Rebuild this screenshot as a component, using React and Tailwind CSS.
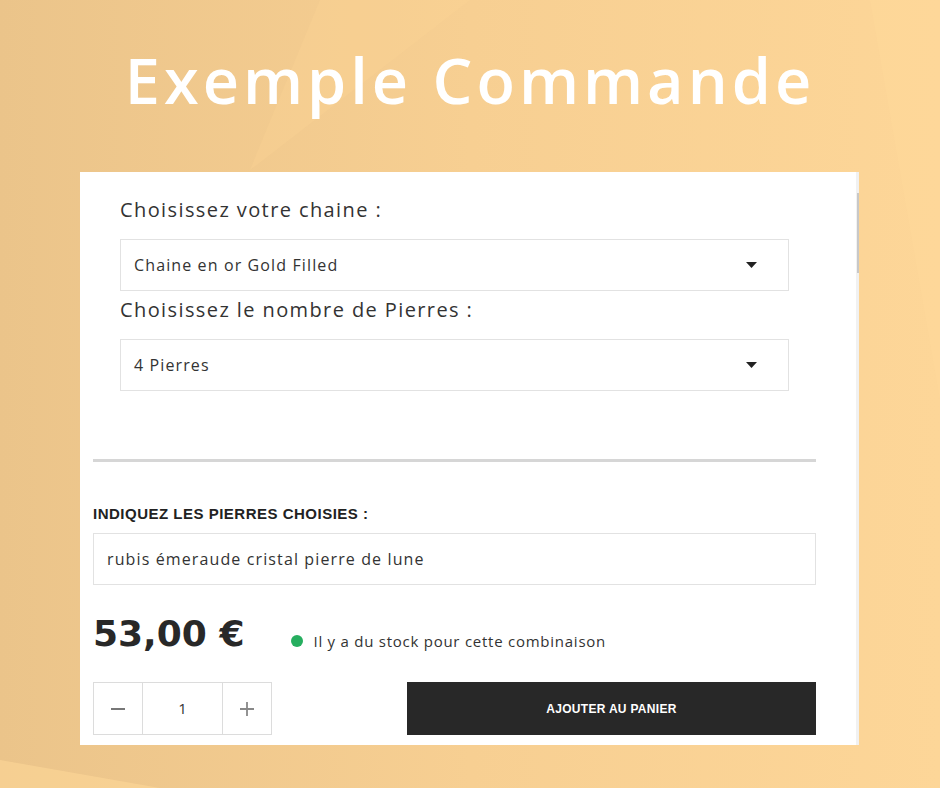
import React from 'react';

function Caret() {
  return (
    <svg width="11" height="6" viewBox="0 0 11 6" className="shrink-0">
      <path d="M0 0h11L5.5 6z" fill="#222" />
    </svg>
  );
}

function SelectBox({ value }) {
  return (
    <div className="flex h-[52px] items-center justify-between border border-[#e2e2e2] pl-[13px] pr-[31px]">
      <span className="text-[16px] tracking-[0.07em] text-[#333]">{value}</span>
      <Caret />
    </div>
  );
}

export default function App() {
  return (
    <div
      className="relative h-[788px] w-[940px] overflow-hidden bg-gradient-to-r from-[#ebc48a] via-[#f7cf92] to-[#fdd698]"
      style={{ fontFamily: '"Open Sans", "Noto Sans", sans-serif' }}
    >
      {/* faint light shapes in the background */}
      <svg className="absolute inset-0" width="940" height="788">
        <polygon points="0,760 0,788 160,788" fill="#fed797" opacity="0.6" />
        <polygon points="320,0 470,0 250,170" fill="#fbd495" opacity="0.35" />
        <polygon points="870,0 940,0 940,400" fill="#ffd99a" opacity="0.4" />
      </svg>

      <h1
        className="relative pt-[40px] text-center text-[63px] font-semibold leading-[80px] tracking-[4px] text-white"
        style={{ fontFamily: '"Open Sans", sans-serif' }}
      >
        Exemple Commande
      </h1>

      <div className="relative ml-[80px] mt-[52px] flex h-[573px] w-[779px] bg-white">
        <div className="flex flex-1 flex-col">
          <div className="pl-[40px] pr-[67px] pt-[24px]">
            <div className="h-[28px] text-[20px] leading-[28px] tracking-[0.07em] text-[#333]">
              Choisissez votre chaine :
            </div>
            <div className="mt-[15px]">
              <SelectBox value="Chaine en or Gold Filled" />
            </div>
            <div className="mt-[5px] h-[28px] text-[20px] leading-[28px] tracking-[0.07em] text-[#333]">
              Choisissez le nombre de Pierres :
            </div>
            <div className="mt-[15px]">
              <SelectBox value="4 Pierres" />
            </div>
          </div>

          <div className="pl-[13px] pr-[40px]">
            <div className="mt-[68px] h-[3px] bg-[#d6d6d6]" />

            <div
              className="mt-[42px] h-[20px] text-[15px] font-bold leading-[20px] tracking-[0.5px] text-[#222]"
              style={{ fontFamily: '"Liberation Sans", Arial, sans-serif' }}
            >
              INDIQUEZ LES PIERRES CHOISIES :
            </div>
            <div className="mt-[9px] flex h-[52px] items-center border border-[#e2e2e2] px-[13px] text-[16px] tracking-[0.07em] text-[#333]">
              rubis émeraude cristal pierre de lune
            </div>

            <div className="mt-[25px] flex h-[48px] items-center">
              <span
                className="text-[36px] font-bold leading-[48px] text-[#282828]"
                style={{ fontFamily: '"DejaVu Sans", sans-serif' }}
              >
                53,00 €
              </span>
              <span className="ml-[47px] mt-[14px] flex items-center text-[15px] tracking-[0.05em] text-[#333]">
                <span className="mr-[10px] h-[12px] w-[12px] rounded-full bg-[#26ae5f]" />
                Il y a du stock pour cette combinaison
              </span>
            </div>

            <div className="mt-[24px] flex h-[53px] justify-between">
              <div className="flex border border-[#dcdcdc]">
                <div className="flex w-[49px] items-center justify-center border-r border-[#dcdcdc]">
                  <svg width="16" height="16" viewBox="0 0 16 16">
                    <path d="M1 8h14" stroke="#777" strokeWidth="2" />
                  </svg>
                </div>
                <div className="flex w-[79px] items-center justify-center text-[15px] text-[#333]">1</div>
                <div className="flex w-[49px] items-center justify-center border-l border-[#dcdcdc]">
                  <svg width="16" height="16" viewBox="0 0 16 16">
                    <path d="M1 8h14M8 1v14" stroke="#888" strokeWidth="1.8" />
                  </svg>
                </div>
              </div>
              <button
                className="flex w-[409px] items-center justify-center bg-[#282828] text-[12px] font-bold tracking-[0.3px] text-white"
                style={{ fontFamily: '"Liberation Sans", Arial, sans-serif' }}
              >
                AJOUTER AU PANIER
              </button>
            </div>
          </div>
        </div>

        <div className="w-[3px] bg-[#f1f1f1]">
          <div className="ml-[1px] mt-[21px] h-[80px] w-[2px] bg-[#c8c8c8]" />
        </div>
      </div>
    </div>
  );
}
